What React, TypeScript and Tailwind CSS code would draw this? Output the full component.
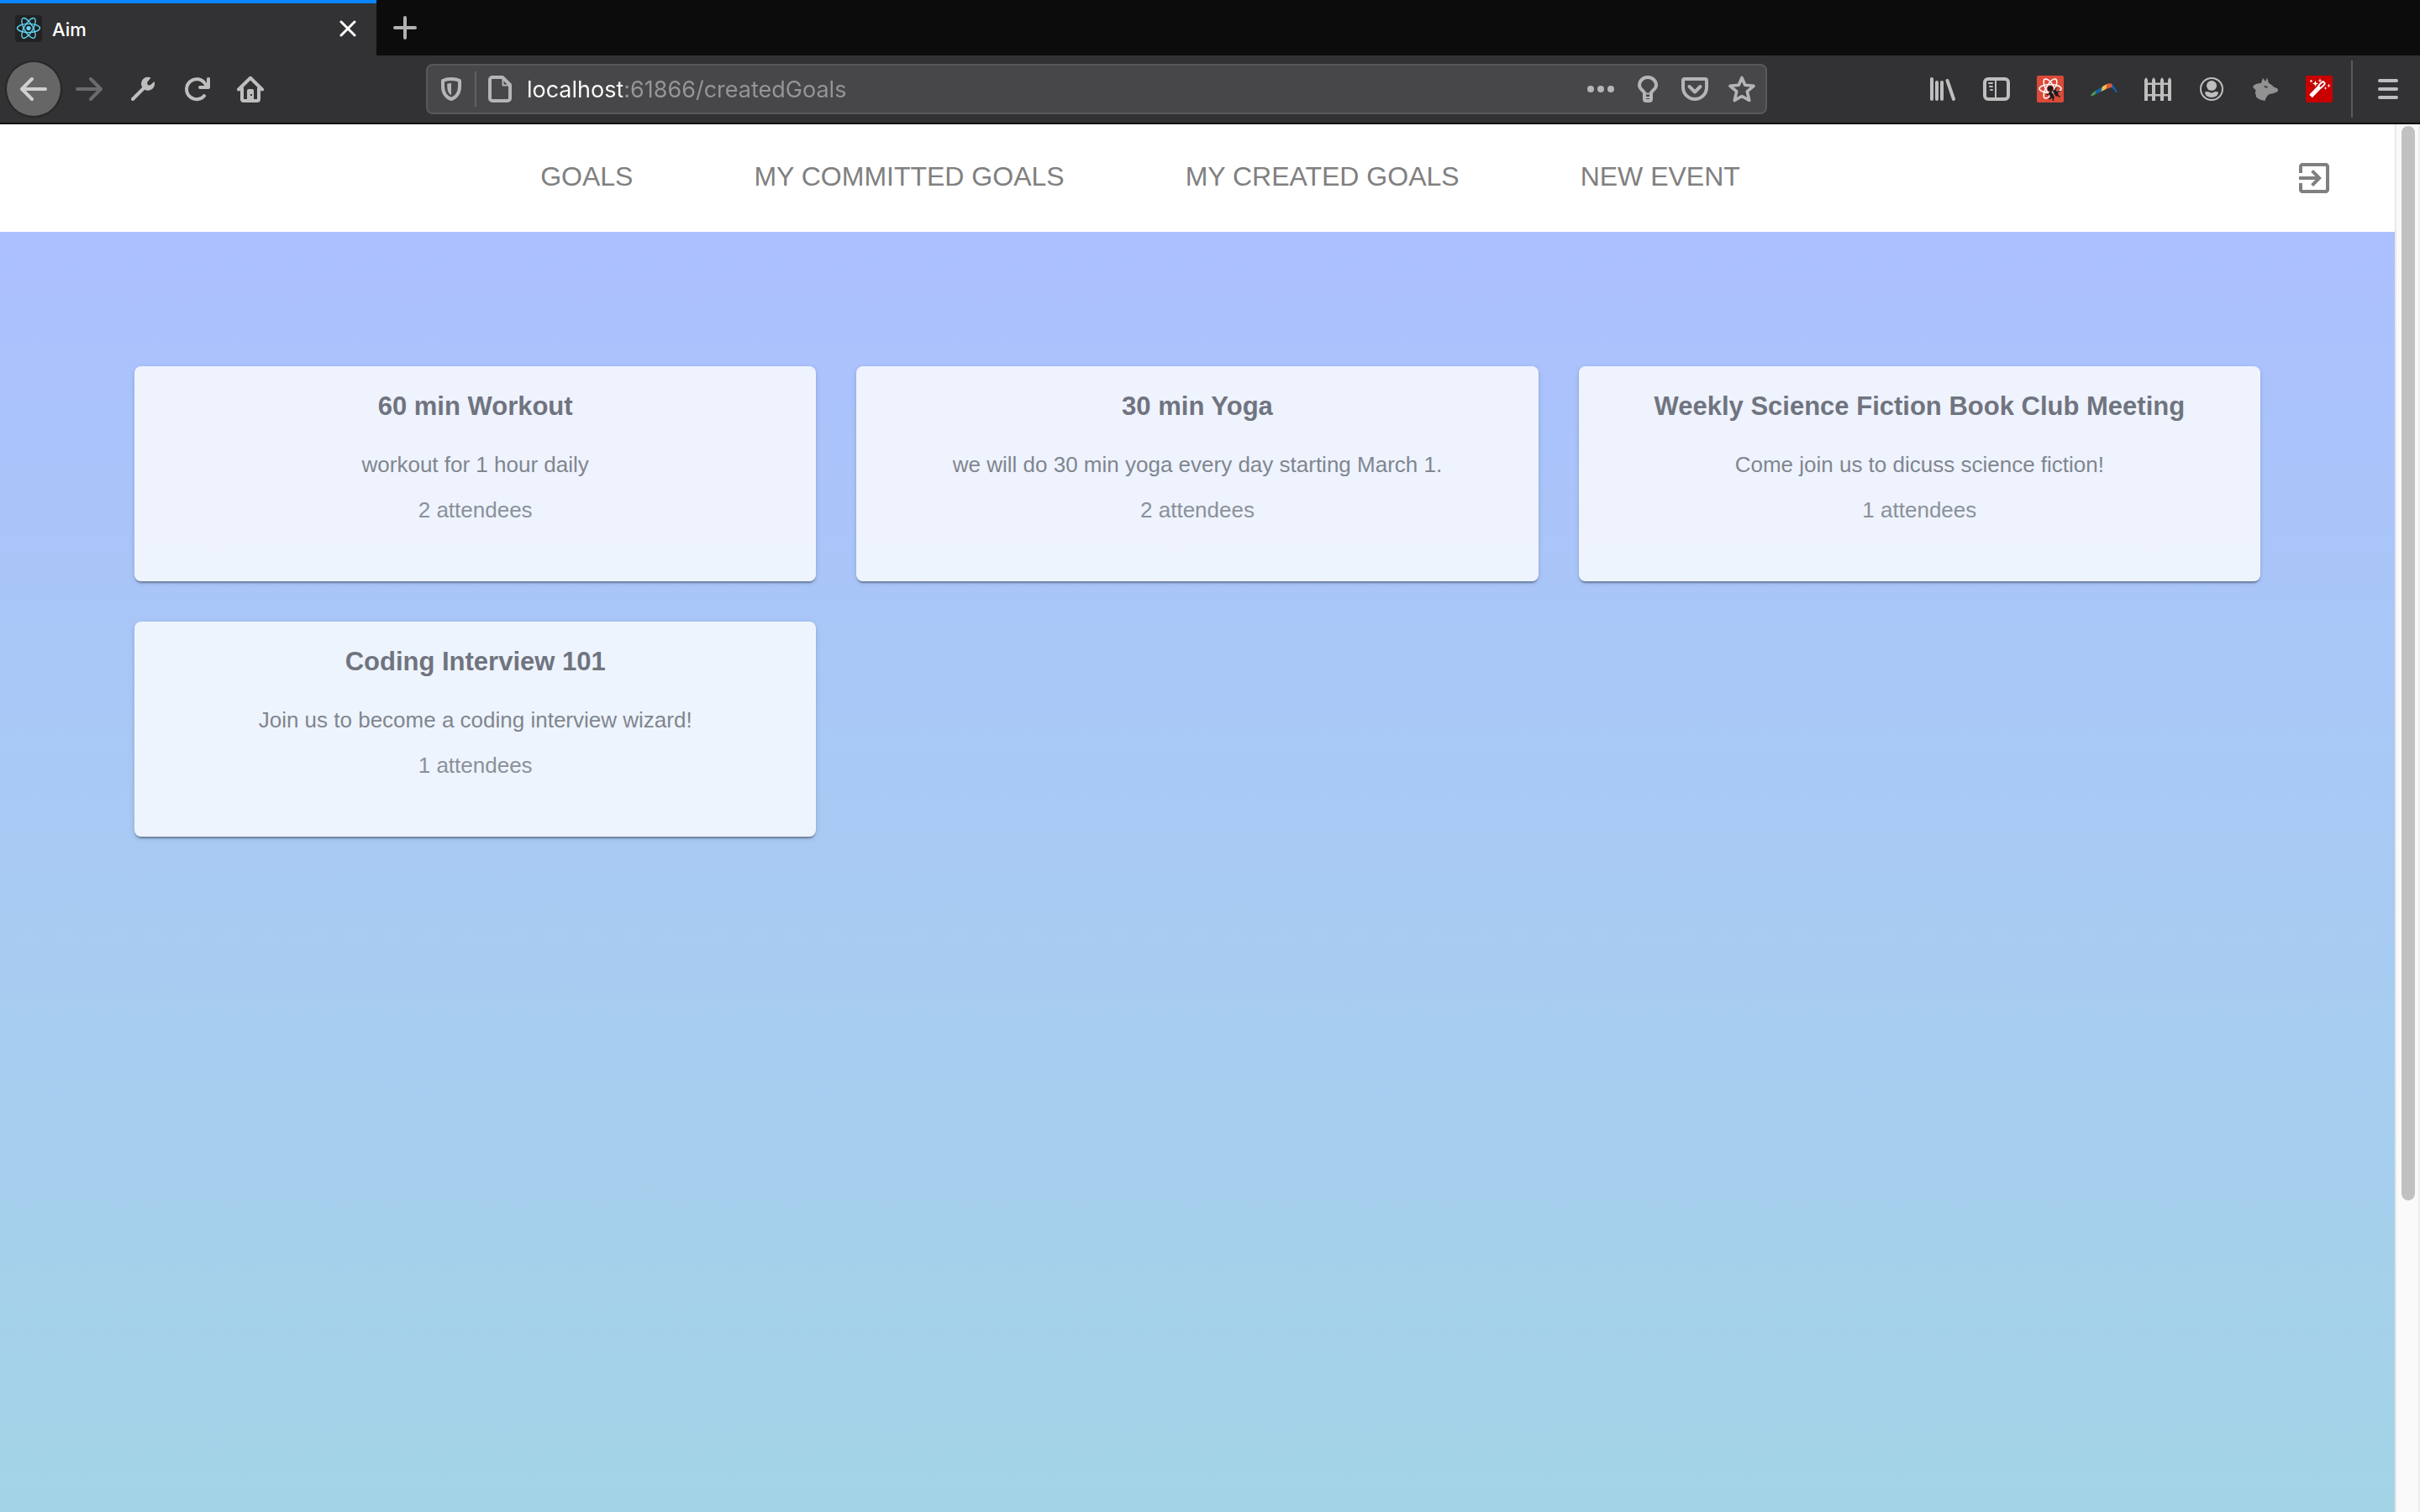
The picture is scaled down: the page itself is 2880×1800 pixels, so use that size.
import type { ReactNode } from 'react';

interface Goal {
  id: number;
  title: string;
  description: string;
  attendees: number;
}

const goals: Goal[] = [
  { id: 1, title: '60 min Workout', description: 'workout for 1 hour daily', attendees: 2 },
  { id: 2, title: '30 min Yoga', description: 'we will do 30 min yoga every day starting March 1.', attendees: 2 },
  { id: 3, title: 'Weekly Science Fiction Book Club Meeting', description: 'Come join us to dicuss science fiction!', attendees: 1 },
  { id: 4, title: 'Coding Interview 101', description: 'Join us to become a coding interview wizard!', attendees: 1 },
];

const navLinks = [
  { label: 'GOALS', href: '#goals' },
  { label: 'MY COMMITTED GOALS', href: '#committedGoals' },
  { label: 'MY CREATED GOALS', href: '#createdGoals' },
  { label: 'NEW EVENT', href: '#newEvent' },
];

const Icon = ({ children }: { children: ReactNode }) => (
  <svg
    viewBox="0 0 32 32"
    className="size-8 shrink-0"
    fill="none"
    stroke="currentColor"
    strokeWidth="4"
    strokeLinecap="round"
    strokeLinejoin="round"
    aria-hidden="true"
  >
    {children}
  </svg>
);

const ReactLogo = () => (
  <svg viewBox="0 0 32 32" className="size-8 shrink-0" fill="none" aria-hidden="true">
    <rect width="32" height="32" rx="4" fill="#222" />
    <g stroke="#61dafb" strokeWidth="1.3">
      <ellipse cx="16" cy="15.500" rx="13.500" ry="5.200" />
      <ellipse cx="16" cy="15.500" rx="13.500" ry="5.200" transform="rotate(60 16 15.5)" />
      <ellipse cx="16" cy="15.500" rx="13.500" ry="5.200" transform="rotate(120 16 15.5)" />
    </g>
    <circle cx="16" cy="15.500" r="2.600" fill="#61dafb" />
  </svg>
);

const BackIcon = () => (
  <Icon>
    <path d="M2 16H30M14 4L2 16L14 28" />
  </Icon>
);

const ForwardIcon = () => (
  <Icon>
    <path d="M2 16H30M18 4L30 16L18 28" />
  </Icon>
);

const WrenchIcon = () => (
  <Icon>
    <path d="M4 28L18 14" />
    <path
      d="M25.500 2.500L21.500 7.500Q20.500 10 22.500 11.200Q24 12 25.500 10.800L29.600 7A8 8 0 1 1 25.500 2.500Z"
      fill="currentColor"
      stroke="none"
    />
  </Icon>
);

const ReloadIcon = () => (
  <Icon>
    <path d="M26 9.500A12 12 0 1 0 25 24.200" />
    <path d="M30 4V14H20" />
    <path d="M24 13L29 8V13Z" fill="currentColor" strokeWidth="1" />
  </Icon>
);

const HomeIcon = () => (
  <Icon>
    <path d="M2 16.500L16 2.800L30 16.500" />
    <path d="M6 15V28a2 2 0 0 0 2 2H24a2 2 0 0 0 2-2V15" />
    <path
      d="M12 30V18a2 2 0 0 1 2-2H18a2 2 0 0 1 2 2V30ZM16 22V24H18V22Z"
      fill="currentColor"
      fillRule="evenodd"
      stroke="none"
    />
  </Icon>
);

const ShieldIcon = () => (
  <Icon>
    <path d="M16 4C20 4 23.500 4.700 26 6V13C26 21 21.500 26.500 16 28C10.500 26.500 6 21 6 13V6C8.500 4.700 12 4 16 4Z" />
    <path d="M16 9C14.300 9 12.800 9.300 11.300 9.800V13.500C11.300 18.500 13.200 21.800 16 23.300Z" fill="currentColor" stroke="none" />
  </Icon>
);

const DocumentIcon = () => (
  <Icon>
    <path d="M7 2H19L28 11V27a3 3 0 0 1-3 3H7a3 3 0 0 1-3-3V5a3 3 0 0 1 3-3Z" />
    <path d="M19.500 3V11.500H28" strokeWidth="2" />
  </Icon>
);

const DotsIcon = () => (
  <Icon>
    <g fill="currentColor" stroke="none">
      <circle cx="4" cy="16" r="4" />
      <circle cx="16" cy="16" r="4" />
      <circle cx="28" cy="16" r="4" />
    </g>
  </Icon>
);

const BulbIcon = () => (
  <Icon>
    <path d="M12 21C12 18 6 16.500 6 11.500A10 9.500 0 0 1 26 11.500C26 16.500 20 18 20 21V28a2 2 0 0 1-2 2H14a2 2 0 0 1-2-2Z" />
    <path d="M13 21.500H19M13 26H19" strokeWidth="2" />
  </Icon>
);

const PocketIcon = () => (
  <Icon>
    <path d="M4 4H28a2 2 0 0 1 2 2V14A14 14 0 0 1 2 14V6a2 2 0 0 1 2-2Z" />
    <path d="M9.500 13L16 19.500L22.500 13" />
  </Icon>
);

const StarIcon = () => (
  <Icon>
    <path
      d="M16 2.500L19.700 11.300L30 12.300L22.300 18.800L24.700 29.500L16 24.500L7.300 29.500L9.700 18.800L2 12.300L12.300 11.300Z"
      strokeWidth="3.600"
    />
  </Icon>
);

const LibraryIcon = () => (
  <Icon>
    <path d="M3 4V28M9 8V28M15 8V28M21.500 6L29 28" />
  </Icon>
);

const SidebarIcon = () => (
  <Icon>
    <rect x="2" y="4" width="28" height="24" rx="4" />
    <path d="M15 4V28M7 9H11M8 13H11M9 17H11" strokeWidth="2" />
  </Icon>
);

const ReactBugIcon = () => (
  <Icon>
    <rect width="32" height="32" rx="2" fill="#dc4a38" stroke="none" />
    <g stroke="#fff" strokeWidth="1.500">
      <ellipse cx="16" cy="15.500" rx="13" ry="5" />
      <ellipse cx="16" cy="15.500" rx="13" ry="5" transform="rotate(60 16 15.5)" />
      <ellipse cx="16" cy="15.500" rx="13" ry="5" transform="rotate(120 16 15.5)" />
    </g>
    <path d="M20 20L26 27L22 31L14 27Z" fill="#dc4a38" stroke="none" />
    <g fill="#1c1c1c" stroke="none">
      <circle cx="16" cy="15.500" r="3.200" />
      <path d="M14 20L17.500 18.500L21 26L19 28Q15.500 26 14 20Z" />
      <path d="M18.500 18L22 16.500Q26 20 25.500 24L23 25Z" />
    </g>
    <path d="M14.500 22L12.500 22.500M16.500 26L15 28M19.500 27L19.500 29.500M22 16.500L23 14.500M24.500 19.500L27 18.500M25 24L27 25" stroke="#1c1c1c" strokeWidth="1.500" />
  </Icon>
);

const BoomerangIcon = () => (
  <Icon>
    <g stroke="none">
      <path d="M0 23.500Q2 20 7 17.500L5.500 22.500Q3 24 .5 24Z" fill="#4a9e5c" />
      <path d="M7 17.500L14 13L12.500 19L5.500 22.500Z" fill="#1560a8" />
      <path d="M14 13L20 9.800L18.500 16L12.500 19Z" fill="#f5c04a" />
      <path d="M20 9.800Q23 8.500 25.500 10L26.500 14Q22 14 18.500 16Z" fill="#e4573d" />
      <path d="M25.500 10Q29.500 14 32 19.500Q31 21 29.500 19.500Q28.500 16 25 14.800Z" fill="#1560a8" />
    </g>
  </Icon>
);

const FenceIcon = () => (
  <Icon>
    <g fill="currentColor" stroke="none">
      <path d="M0 30V5L2 2L4 5V30Z" />
      <path d="M9 30V5L11 2L13 5V30Z" />
      <path d="M19 30V5L21 2L23 5V30Z" />
      <path d="M28 30V5L30 2L32 5V30Z" />
      <rect y="8.500" width="32" height="2.500" />
      <rect y="22" width="32" height="2.500" />
    </g>
  </Icon>
);

const AccountIcon = () => (
  <Icon>
    <circle cx="16" cy="16" r="13" strokeWidth="2" />
    <circle cx="16" cy="12" r="6" fill="currentColor" stroke="none" />
    <path d="M8 19.500Q12 18.500 13 19.500Q16 21.500 19 19.500Q20 18.500 24 19.500Q24 26 16 26Q8 26 8 19.500Z" fill="currentColor" stroke="none" />
  </Icon>
);

const WolfIcon = () => (
  <Icon>
    <path
      d="M1 13Q4 9 11 9L13 3L16 7L18 2.500L20 9Q24 11 26 13.500L30.500 15.500Q32 18 29.500 19.500Q25 21.500 21 22Q17 24 15.500 30Q8 29 4.500 25Q6 24 3.500 21Q5 20 4 16.500Q2 16 1 13ZM14 12.500Q16 15.500 19 14Q18 11.500 14 12.500Z"
      fill="#929292"
      fillRule="evenodd"
      stroke="none"
    />
  </Icon>
);

const WandIcon = () => (
  <Icon>
    <rect width="32" height="32" rx="2" fill="#c80000" stroke="none" />
    <path d="M6 24.500L20 10" stroke="#fff" strokeWidth="5" strokeLinecap="butt" />
    <path d="M17.500 12.500L20.500 9.500" stroke="#fff" strokeWidth="6" />
    <path d="M17.500 12.500L20.500 9.500" stroke="#c80000" strokeWidth="2" />
    <g fill="#fff" stroke="none">
      <path d="M11.500 6L12.500 8.500L15 9.500L12.500 10.500L11.500 13L10.500 10.500L8 9.500L10.500 8.500Z" />
      <path d="M17 3L17.600 5.400L20 6L17.600 6.600L17 9L16.400 6.600L14 6L16.400 5.400Z" />
      <path d="M27.500 9.500L28.100 11.400L30 12L28.100 12.600L27.500 14.500L26.900 12.600L25 12L26.900 11.400Z" />
      <path d="M23.500 13L24 14.500L25.500 15L24 15.500L23.500 17L23 15.500L21.500 15L23 14.500Z" />
      <circle cx="6.500" cy="6.500" r="1.300" />
    </g>
  </Icon>
);

const MenuIcon = () => (
  <Icon>
    <path d="M6 6H26M6 16H26M6 26H26" />
  </Icon>
);

const leftTools = [
  { label: 'Developer tools', icon: WrenchIcon },
  { label: 'Reload', icon: ReloadIcon },
  { label: 'Home', icon: HomeIcon },
];

const addressActions = [
  { label: 'Page actions', icon: DotsIcon },
  { label: 'Tips', icon: BulbIcon },
  { label: 'Save to Pocket', icon: PocketIcon },
  { label: 'Bookmark this page', icon: StarIcon },
];

const extensions = [
  { label: 'Library', icon: LibraryIcon },
  { label: 'Sidebars', icon: SidebarIcon },
  { label: 'React tools', icon: ReactBugIcon },
  { label: 'Boomerang', icon: BoomerangIcon },
  { label: 'Fence', icon: FenceIcon },
  { label: 'Account', icon: AccountIcon },
  { label: 'Wolf', icon: WolfIcon },
  { label: 'Wand', icon: WandIcon },
];

const TabStrip = () => (
  <div className="flex h-[66px] bg-[#0c0c0d]">
    <div className="flex w-[448px] items-center border-t-4 border-[#0a84ff] bg-[#323234] pr-6 pb-0.5 pl-[18px]">
      <ReactLogo />
      <span className="ml-3 flex-1 pt-0.5 text-[22px] font-medium text-white">Aim</span>
      <button type="button" aria-label="Close tab" className="text-white">
        <svg viewBox="0 0 20 20" className="size-5" fill="none" stroke="currentColor" strokeWidth="3" strokeLinecap="round">
          <path d="M2 2L18 18M18 2L2 18" />
        </svg>
      </button>
    </div>
    <button type="button" aria-label="New tab" className="flex w-[68px] items-center justify-center text-[#b1b1b3]">
      <svg viewBox="0 0 28 28" className="size-7" fill="none" stroke="currentColor" strokeWidth="4" strokeLinecap="round">
        <path d="M14 2V26M2 14H26" />
      </svg>
    </button>
  </div>
);

const AddressBar = () => (
  <div className="flex h-[60px] flex-9 items-center rounded-lg border-2 border-[#59595b] bg-[#474749] text-[#b5b5b7]">
    <button type="button" aria-label="Tracking protection" className="flex w-14 justify-center">
      <ShieldIcon />
    </button>
    <div className="h-[42px] w-0.5 bg-[#5c6169]" />
    <button type="button" aria-label="Site information" className="flex w-14 justify-center">
      <DocumentIcon />
    </button>
    {/* host is brighter than the rest of the address */}
    <input
      type="text"
      aria-label="Address"
      defaultValue="localhost:61866/createdGoals"
      className="ml-1 min-w-0 flex-1 bg-[linear-gradient(to_right,#fff_114px,#969698_114px)] bg-clip-text pt-0.5 text-[27px] text-transparent outline-none"
    />
    {addressActions.map(({ label, icon: ActionIcon }) => (
      <button key={label} type="button" aria-label={label} className="flex w-14 justify-center">
        <ActionIcon />
      </button>
    ))}
  </div>
);

const Toolbar = () => (
  <div className="flex h-[82px] items-center border-b-2 border-[#0c0c0d] bg-[#323234] text-[#bebebf]">
    <button
      type="button"
      aria-label="Back"
      className="ml-2 flex size-16 items-center justify-center rounded-full bg-[#666667] text-[#d0d0d0] ring-2 ring-[#272728]"
    >
      <BackIcon />
    </button>
    <button type="button" aria-label="Forward" disabled className="ml-0.5 flex w-16 justify-center text-[#6b6b6c]">
      <ForwardIcon />
    </button>
    {leftTools.map(({ label, icon: ToolIcon }) => (
      <button key={label} type="button" aria-label={label} className="flex w-16 justify-center">
        <ToolIcon />
      </button>
    ))}
    <div className="flex-1" />
    <AddressBar />
    <div className="flex-1" />
    {extensions.map(({ label, icon: ExtensionIcon }) => (
      <button key={label} type="button" aria-label={label} className="flex w-16 justify-center">
        <ExtensionIcon />
      </button>
    ))}
    <div className="mx-1.5 h-[68px] w-0.5 bg-[#5b5b5d]" />
    <button type="button" aria-label="Open menu" className="mr-1.5 ml-1 flex w-16 justify-center">
      <MenuIcon />
    </button>
  </div>
);

const NavBar = () => (
  <header className="flex h-32 items-center bg-white pr-12 text-[#808080]">
    <nav className="flex flex-1 justify-center gap-36 pb-1 pl-2">
      {navLinks.map((link) => (
        <a key={link.label} href={link.href} className="text-[32px] leading-10">
          {link.label}
        </a>
      ))}
    </nav>
    <button type="button" aria-label="Log out" className="p-6">
      <svg viewBox="0 0 24 24" className="size-12" fill="currentColor" aria-hidden="true">
        <path d="M10.090 15.590L11.500 17l5-5-5-5-1.410 1.410L12.670 11H3v2h9.670l-2.580 2.590zM19 3H5c-1.110 0-2 .9-2 2v4h2V5h14v14H5v-4H3v4c0 1.100.89 2 2 2h14c1.100 0 2-.9 2-2V5c0-1.100-.9-2-2-2z" />
      </svg>
    </button>
  </header>
);

const GoalCard = ({ goal }: { goal: Goal }) => (
  <article className="rounded-lg bg-white/80 px-8 pt-8 pb-16 text-center shadow-[0_4px_2px_-2px_rgba(0,0,0,0.2),0_2px_2px_0_rgba(0,0,0,0.14),0_2px_6px_0_rgba(0,0,0,0.12)]">
    <h2 className="text-[31px] leading-8 font-bold text-[#70747f]">{goal.title}</h2>
    <p className="mt-8 text-[26px] leading-[42px] text-[#81868f]">{goal.description}</p>
    <p className="mt-3 text-[26px] leading-[42px] text-[#8b919a]">{goal.attendees} attendees</p>
  </article>
);

const Scrollbar = () => (
  <div className="w-[30px] border-r-2 border-l-2 border-r-[#ededed] border-l-[#e8e8e8] bg-[#fafafa] pt-0.5" aria-hidden="true">
    <div className="mr-1 ml-1.5 h-[77.5%] rounded-full bg-[#c1c1c1]" />
  </div>
);

const App = () => {
  return (
    <div className="flex min-h-screen flex-col">
      <div className="font-[Inter,sans-serif]">
        <TabStrip />
        <Toolbar />
      </div>
      <div className="flex flex-1 font-['Liberation_Sans',Arial,sans-serif]">
        <div className="flex flex-1 flex-col">
          <NavBar />
          <main className="flex-1 bg-linear-to-b from-[#acc0ff] to-[#a3d4e6] p-40">
            <div className="grid grid-cols-3 gap-12">
              {goals.map((goal) => (
                <GoalCard key={goal.id} goal={goal} />
              ))}
            </div>
          </main>
        </div>
        <Scrollbar />
      </div>
    </div>
  );
};

export default App;
